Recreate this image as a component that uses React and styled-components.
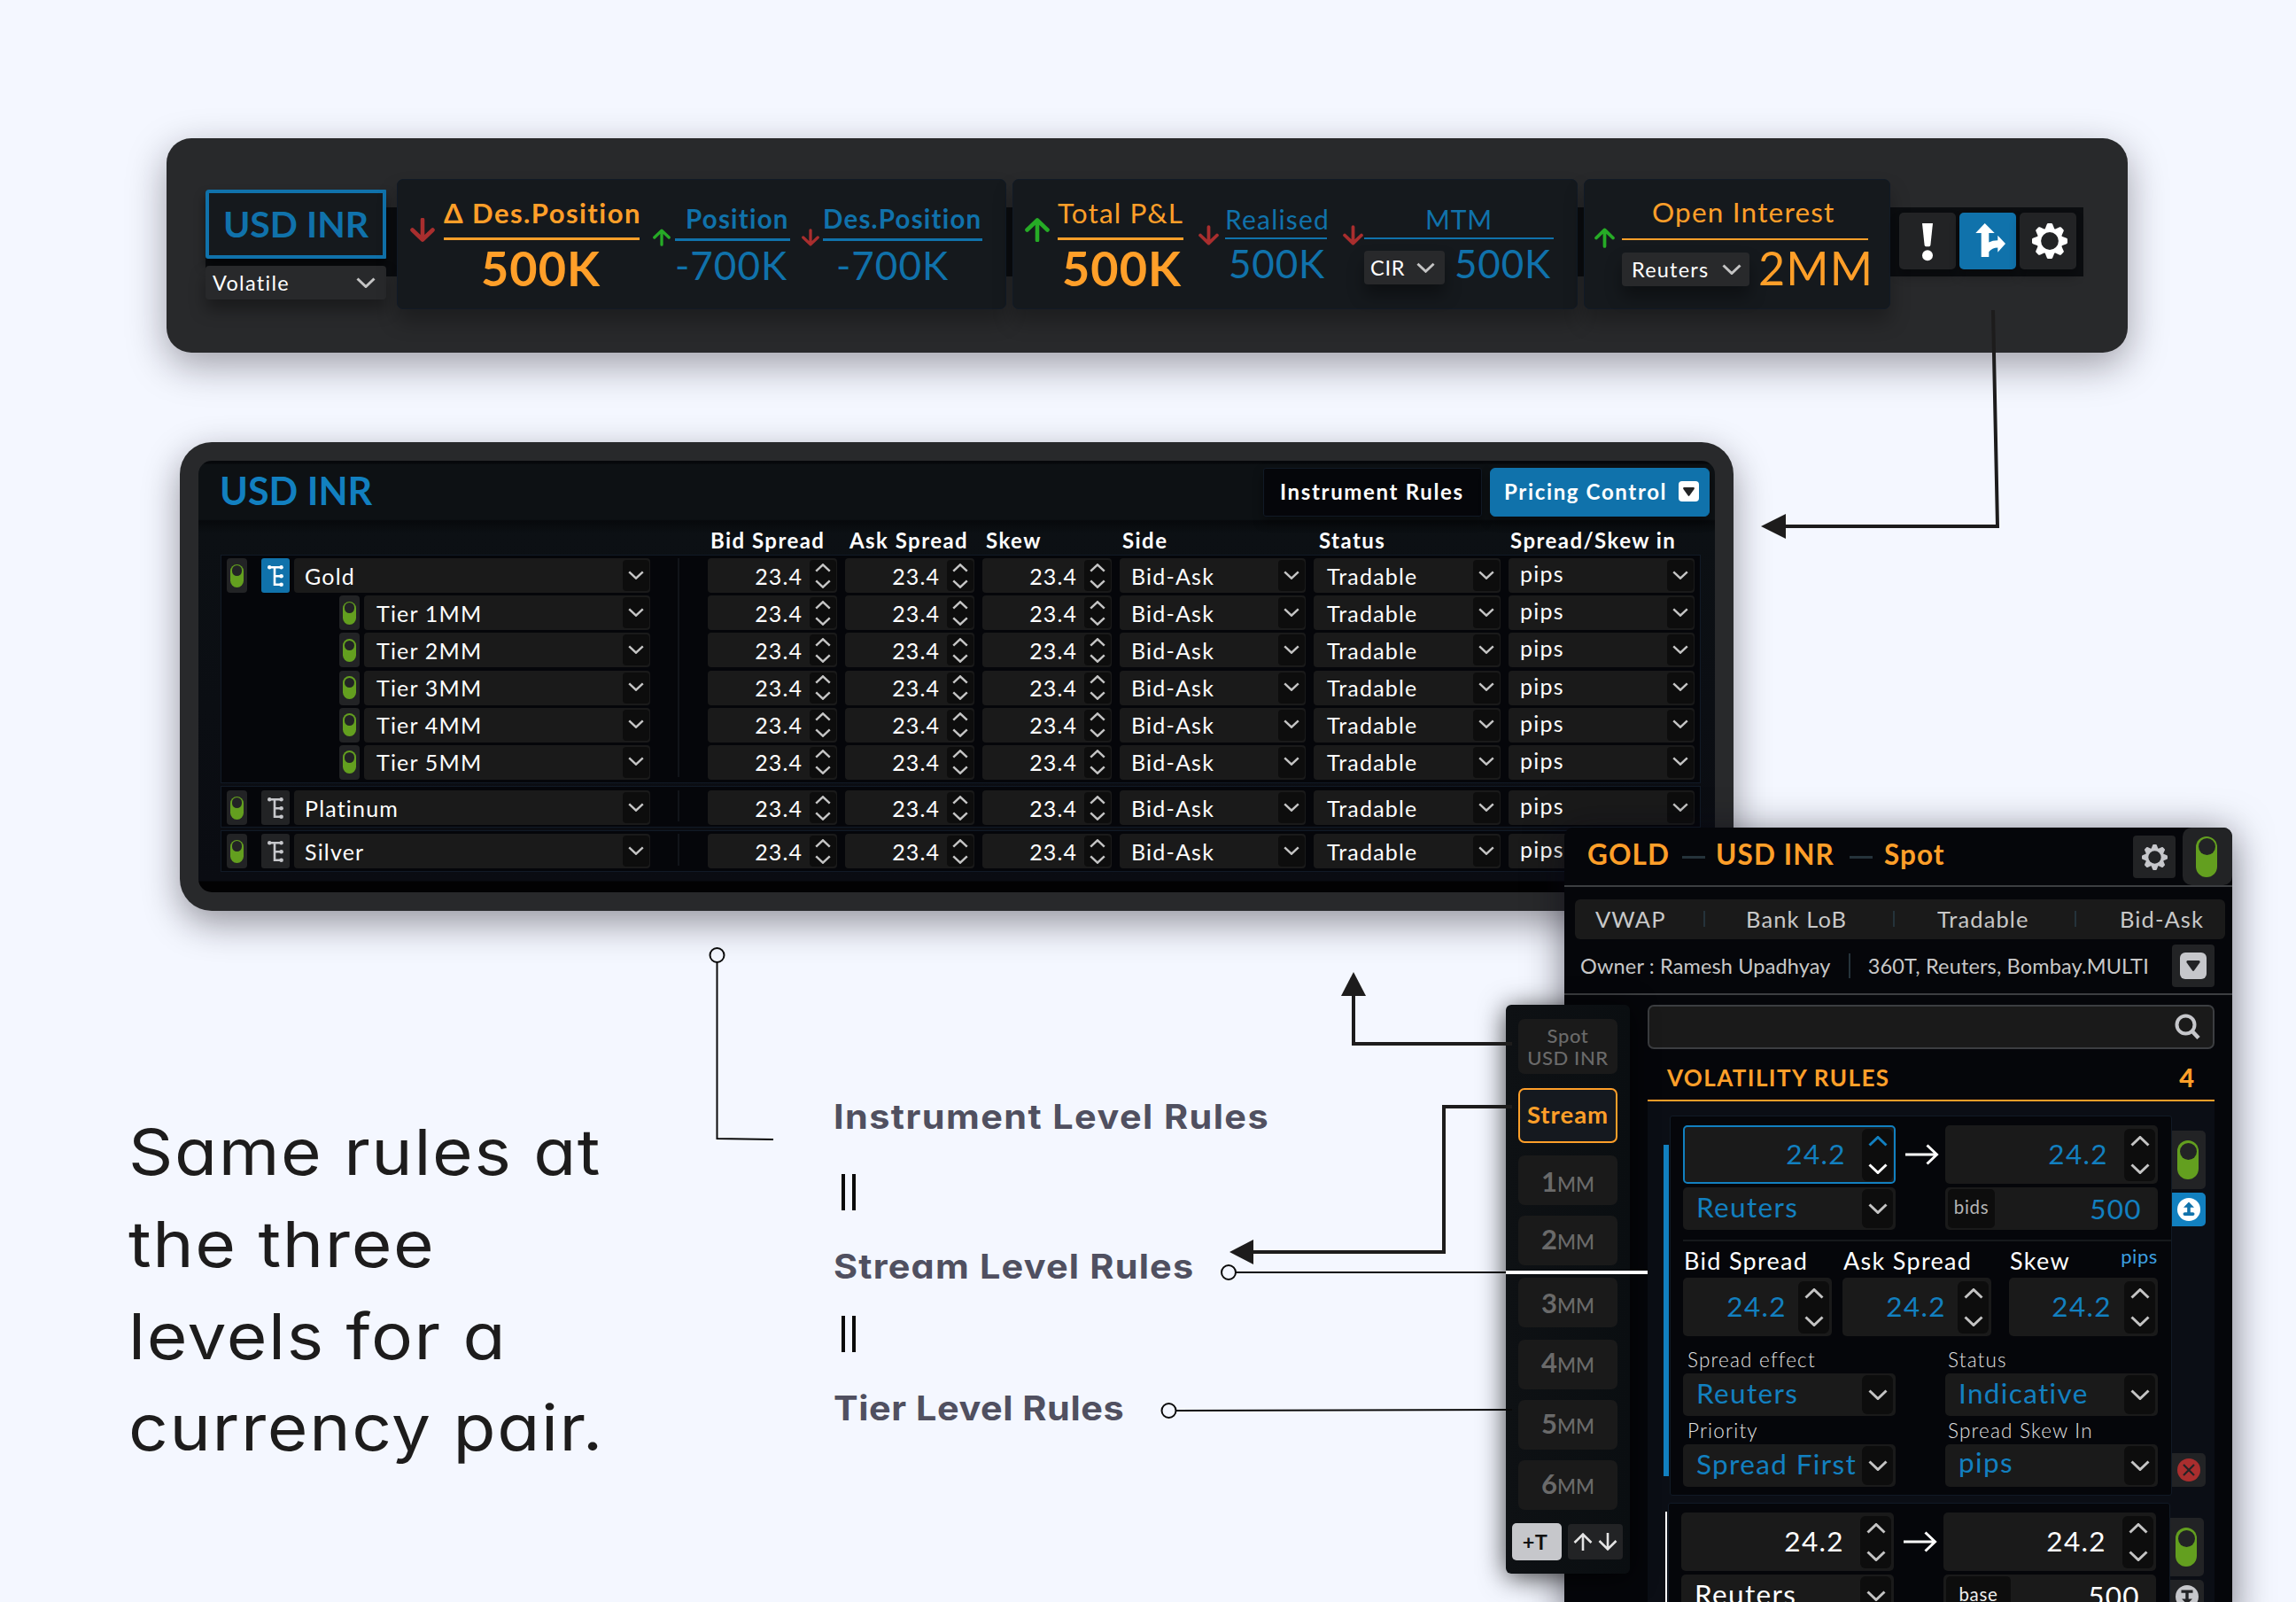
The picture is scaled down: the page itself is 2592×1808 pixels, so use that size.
import React from "react";
import styled, { createGlobalStyle, css, ThemeProvider } from "styled-components";

const theme = {
  page: "#f4f7ff",
  frame: "#28292b",
  black: "#05060a",
  panel: "#15191d",
  field: "#1a1a1a",
  fieldDark: "#0d0d0d",
  button: "#222325",
  line: "#3c3e41",
  edge: "#111a26",
  blue: "#1072ab",
  sky: "#1280c0",
  orange: "#ff9f29",
  green: "#639f1f",
  up: "#26ab26",
  red: "#a92e2e",
  silver: "#c6c7cb",
  ink: "#1d1c1c",
  muted: "#505060"
};

const GlobalStyle = createGlobalStyle`
  * { box-sizing: border-box; }
  body {
    margin: 0;
    background: #f4f7ff;
    font-family: Lato, "Open Sans", sans-serif;
    color: white;
  }
  svg { display: block; flex: none; }
`;

const Canvas = styled.main`
  position: relative;
  width: 2592px;
  height: 1808px;
  overflow: hidden;
  background: ${p => p.theme.page};
`;

/* ---------- icons ---------- */

const Chevron = ({ up, color = "#c4c4c4", w = 22, h = 12 }) => (
  <svg width={w} height={h} viewBox="0 0 22 12" fill="none">
    <path
      d={up ? "M1.5 10.5 11 1.5l9.5 9" : "M1.5 1.5 11 10.5l9.5-9"}
      stroke={color}
      strokeWidth="3"
    />
  </svg>
);

const TrendArrow = ({ up, w = 28, h = 27 }) => (
  <svg width={w} height={h} viewBox="0 0 28 27" fill="none">
    <path
      d={up ? "M14 25V3M2.5 13.5 14 2.5l11.5 11" : "M14 2v22M2.5 13.5l11.5 11 11.5-11"}
      stroke={up ? theme.up : theme.red}
      strokeWidth="4.6"
      strokeLinecap="round"
      strokeLinejoin="round"
    />
  </svg>
);

const Gear = ({ size = 40, color = "white", hole = theme.button }) => (
  <svg width={size} height={size} viewBox="-20 -20 40 40">
    {[0, 45, 90, 135, 180, 225, 270, 315].map(a => (
      <path
        key={a}
        d="M-5.5-13-3.2-19q.4-1 1.4-1h3.6q1 0 1.4 1L5.5-13z"
        fill={color}
        transform={`rotate(${a})`}
      />
    ))}
    <circle r="14.6" fill={color} />
    <circle r="9.9" fill={hole} />
  </svg>
);

const Alert = () => (
  <svg width="64" height="64" viewBox="0 0 64 64" fill="white">
    <path d="M26 12h12l-2.6 24.5q-.2 1.7-1.6 1.7h-3.6q-1.4 0-1.6-1.7z" />
    <circle cx="32" cy="48.3" r="6" />
  </svg>
);

const Fork = () => (
  <svg width="64" height="64" viewBox="0 0 64 64" fill="white">
    <path d="M28.7 12 39.7 23h-6.4v10.5q4-2.2 10-2.2v-5.6L52 35l-8.7 9.7v-5.2q-6.5.2-10 4.8V50h-8.6V23h-6.4z" />
  </svg>
);

const Tree = ({ color }) => (
  <svg width="18" height="24" viewBox="0 0 18 24" fill="none">
    <path d="M2 2.2h13M8 2.2v19.6h8M8 12.2h8" stroke={color} strokeWidth="2.6" />
    <g fill={color}>
      <circle cx="2.2" cy="2.2" r="2.2" />
      <circle cx="15.6" cy="2.2" r="2.2" />
      <circle cx="15.6" cy="12.2" r="2.3" />
      <circle cx="15.6" cy="21.7" r="2.3" />
    </g>
  </svg>
);

const Magnifier = () => (
  <svg width="30" height="30" viewBox="0 0 30 30" fill="none" stroke={theme.silver}>
    <circle cx="12.5" cy="12.5" r="10" strokeWidth="4" />
    <path d="M19.5 19.5l7.5 8" strokeWidth="4.6" />
  </svg>
);

const ArrowIcon = styled.svg`
  margin-left: 4px;
`;

const RightArrow = () => (
  <ArrowIcon width="38" height="24" viewBox="0 0 38 24" fill="none" stroke="white" strokeWidth="3">
    <path d="M0 12h35M24.5 1.5 35.5 12l-11 10.5" />
  </ArrowIcon>
);

const Pin = ({ down, color, glyph }) => (
  <svg width="26" height="26" viewBox="0 0 26 26">
    <circle cx="13" cy="13" r="13" fill={color} />
    {down ? (
      <path d="M6.5 5.5h13v3.2h-4.8v6.8h4.3l-6 6-6-6h4.3V8.7H6.5z" fill={glyph} />
    ) : (
      <path d="M13 4.5l6 6.3h-4.200v5.400h2.700q2 0 2 1.900t-2 1.900h-9q-2 0-2-1.900t2-1.900h2.700v-5.400H7z" fill={glyph} />
    )}
  </svg>
);

const Cross = () => (
  <svg width="26" height="26" viewBox="0 0 26 26">
    <circle cx="13" cy="13" r="13" fill={theme.red} />
    <path d="M7 7l12 12M19 7L7 19" stroke="#222325" strokeWidth="2.2" />
  </svg>
);

const SortArrows = () => (
  <svg width="50" height="22" viewBox="0 0 50 22" fill="none" stroke="#e4e4e4" strokeWidth="2.6">
    <path d="M11 21V3M1.5 12 11 2.5l9.5 9.5M39 1v18M29.5 10l9.5 9.5 9.5-9.5" />
  </svg>
);

const DropMark = ({ w = 13, h = 10 }) => (
  <svg width={w} height={h} viewBox="0 0 13 10">
    <path d="M1.2 0h10.6q1.6.3.8 2L7.4 9.3q-.9 1.2-1.8 0L.4 2Q-.4.3 1.2 0z" fill="#222325" />
  </svg>
);

/* ---------- shared parts ---------- */

const PillBody = styled.span`
  display: block;
  width: ${p => p.$w}px;
  height: ${p => p.$h}px;
  padding: ${p => p.$rim}px;
  border-radius: ${p => p.$w}px;
  background: ${p => p.theme.green};

  &::before {
    content: "";
    display: block;
    aspect-ratio: 1;
    border-radius: 50%;
    background: ${p => p.theme.button};
  }
`;

const ToggleBox = styled.div`
  display: flex;
  align-items: center;
  justify-content: center;
  flex: none;
  width: ${p => p.$w || 23}px;
  height: ${p => p.$h || 39}px;
  padding-right: ${p => p.$pr || 0}px;
  border-radius: ${p => p.$r || "4px"};
  background: ${p => p.theme.button};
`;

const SmallToggle = () => (
  <ToggleBox>
    <PillBody $w={15} $h={26} $rim={1.7} />
  </ToggleBox>
);

/* ---------- top bar ---------- */

const TopBar = styled.section`
  position: absolute;
  left: 188px;
  top: 156px;
  width: 2214px;
  height: 242px;
  padding: 46px 50px 0 44px;
  border-radius: 28px;
  background: ${p => p.theme.frame};
  box-shadow: 0 14px 44px rgba(20, 15, 25, 0.38);
`;

const Strip = styled.div`
  display: flex;
  align-items: flex-start;
  height: 147px;
  background: linear-gradient(#0b0d10, #0b0d10) 0 32px / 100% 78px no-repeat;
`;

const PairColumn = styled.div`
  width: 204px;
  margin: 12px 12px 0 0;
`;

const PairName = styled.div`
  height: 78px;
  border: 4px solid ${p => p.theme.blue};
  border-radius: 4px 1px 1px 3px;
  background: ${p => p.theme.panel};
  color: ${p => p.theme.blue};
  font-size: 41px;
  font-weight: 700;
  line-height: 69px;
  text-align: center;
  white-space: nowrap;
  box-shadow: 0 8px 12px rgba(0, 0, 0, 0.5);
`;

const SmallSelect = styled.div`
  display: flex;
  align-items: center;
  justify-content: space-between;
  flex: none;
  width: ${p => p.$w}px;
  height: 38px;
  margin-top: ${p => p.$mt || 0}px;
  padding: 0 ${p => p.$pr || 12}px 0 ${p => p.$pl || 8}px;
  border-radius: 4px;
  background: #28292b;
  font-size: 23.5px;
  letter-spacing: ${p => p.$ls ?? 1.2}px;
  box-shadow: 0 12px 18px rgba(0, 0, 0, 0.35);
`;

const MetricPanel = styled.div`
  display: flex;
  align-items: flex-start;
  width: ${p => p.$w}px;
  height: 147px;
  margin-right: ${p => (p.$last ? 10 : 7)}px;
  border: 1px solid ${p => p.theme.edge};
  border-radius: 7px;
  background: ${p => p.theme.panel};
  box-shadow: 0 14px 22px rgba(0, 0, 0, 0.28);
`;

const ArrowSlot = styled.div`
  margin: ${p => p.$mt}px ${p => p.$mr}px 0 ${p => p.$ml}px;
`;

const Metric = styled.div`
  width: ${p => p.$w}px;
  padding-top: ${p => p.$pt}px;
  color: ${p => (p.$hot ? p.theme.orange : p.theme.blue)};
`;

const MetricLabel = styled.div`
  padding-left: ${p => p.$pl || 0}px;
  font-size: ${p => p.$size}px;
  font-weight: ${p => (p.$bold ? 700 : 400)};
  line-height: 1.2;
  letter-spacing: ${p => p.$ls ?? 1.2}px;
  white-space: nowrap;
`;

const Rule = styled.div`
  height: ${p => p.$h || 2}px;
  margin-top: ${p => p.$mt}px;
  background: currentColor;
`;

const MetricValue = styled.div`
  margin-top: ${p => p.$mt || 0}px;
  padding-left: ${p => p.$pl || 0}px;
  font-size: ${p => p.$size}px;
  font-weight: ${p => (p.$bold ? 700 : 400)};
  line-height: 1.2;
  letter-spacing: ${p => p.$ls ?? 0.9}px;
  white-space: nowrap;
`;

const ValueLine = styled.div`
  display: flex;

  ${SmallSelect} {
    color: white;
  }
`;

const ToolButton = styled.div`
  display: flex;
  align-items: center;
  justify-content: center;
  width: 64px;
  height: 64px;
  margin: 38px 4px 0 0;
  border-radius: 5px;
  background: ${p => (p.$active ? p.theme.blue : p.theme.button)};
  box-shadow: 0 8px 12px rgba(0, 0, 0, 0.25);
`;

const GearShift = styled.div`
  margin-left: 3px;
`;

const Positions = () => (
  <TopBar>
    <Strip>
      <PairColumn>
        <PairName>USD INR</PairName>
        <SmallSelect $w={204} $mt={8} $ls={1.3}>
          Volatile <Chevron />
        </SmallSelect>
      </PairColumn>

      <MetricPanel $w={688}>
        <ArrowSlot $ml={14} $mt={43} $mr={10}>
          <TrendArrow />
        </ArrowSlot>
        <Metric $w={221} $pt={19} $hot>
          <MetricLabel $size={31} $bold $ls={1.45}>Δ Des.Position</MetricLabel>
          <Rule $mt={9} $h={3} />
          <MetricValue $size={54} $bold $pl={42} $ls={1}>500K</MetricValue>
        </Metric>
        <ArrowSlot $ml={15} $mt={55} $mr={5}>
          <TrendArrow up w={20} h={20} />
        </ArrowSlot>
        <Metric $w={130} $pt={26}>
          <MetricLabel $size={29.5} $bold $pl={12}>Position</MetricLabel>
          <Rule $mt={5} $h={3} />
          <MetricValue $size={44} $mt={1} $ls={1}>-700K</MetricValue>
        </Metric>
        <ArrowSlot $ml={13} $mt={55} $mr={4}>
          <TrendArrow w={20} h={20} />
        </ArrowSlot>
        <Metric $w={180} $pt={26}>
          <MetricLabel $size={29.5} $bold>Des.Position</MetricLabel>
          <Rule $mt={5} $h={3} />
          <MetricValue $size={44} $mt={1} $pl={15} $ls={1}>-700K</MetricValue>
        </Metric>
      </MetricPanel>

      <MetricPanel $w={638}>
        <ArrowSlot $ml={13} $mt={43} $mr={9}>
          <TrendArrow up />
        </ArrowSlot>
        <Metric $w={142} $pt={19} $hot>
          <MetricLabel $size={31.5} $ls={1.1}>Total P&amp;L</MetricLabel>
          <Rule $mt={8} $h={3} />
          <MetricValue $size={54} $bold $pl={5} $ls={1}>500K</MetricValue>
        </Metric>
        <ArrowSlot $ml={17} $mt={51} $mr={7}>
          <TrendArrow w={23} h={23} />
        </ArrowSlot>
        <Metric $w={115} $pt={26}>
          <MetricLabel $size={30} $ls={1.2}>Realised</MetricLabel>
          <Rule $mt={3} $h={2} />
          <MetricValue $size={44} $mt={1} $pl={4} $ls={0.8}>500K</MetricValue>
        </Metric>
        <ArrowSlot $ml={18} $mt={51} $mr={1}>
          <TrendArrow w={23} h={23} />
        </ArrowSlot>
        <Metric $w={214} $pt={26}>
          <MetricLabel $size={30} $pl={69} $ls={0.9}>MTM</MetricLabel>
          <Rule $mt={3} $h={2} />
          <ValueLine>
            <SmallSelect $w={91} $mt={13} $pr={11} $pl={7} $ls={0.7}>
              CIR <Chevron w={21} />
            </SmallSelect>
            <MetricValue $size={44} $mt={1} $pl={11} $ls={0.8}>500K</MetricValue>
          </ValueLine>
        </Metric>
      </MetricPanel>

      <MetricPanel $w={346} $last>
        <ArrowSlot $ml={11} $mt={54} $mr={8}>
          <TrendArrow up w={23} h={23} />
        </ArrowSlot>
        <Metric $w={278} $pt={18} $hot>
          <MetricLabel $size={31.5} $pl={34} $ls={1.2}>Open Interest</MetricLabel>
          <Rule $mt={10} $h={2} />
          <ValueLine>
            <SmallSelect $w={144} $mt={14} $pl={11} $pr={9}>
              Reuters <Chevron />
            </SmallSelect>
            <MetricValue $size={52} $pl={10} $ls={1.2}>2MM</MetricValue>
          </ValueLine>
        </Metric>
      </MetricPanel>

      <ToolButton><Alert /></ToolButton>
      <ToolButton $active><Fork /></ToolButton>
      <ToolButton><GearShift><Gear /></GearShift></ToolButton>
    </Strip>
  </TopBar>
);

/* ---------- pricing table ---------- */

const TableWindow = styled.section`
  position: absolute;
  left: 203px;
  top: 499px;
  width: 1754px;
  height: 529px;
  padding: 21px;
  border-radius: 36px;
  background: ${p => p.theme.frame};
  box-shadow: 0 14px 40px rgba(20, 15, 25, 0.42);
`;

const TableBody = styled.div`
  height: 487px;
  border-radius: 15px;
  background: linear-gradient(#06080b 0 3px, #0d1114 4px 66px, #07090c 68px, #0c1014 82px, #0a0c12 474px, #020203 475px);
  overflow: hidden;
`;

const TableHeader = styled.header`
  display: flex;
  align-items: flex-start;
  height: 66px;
  padding: 8px 6px 0 24px;
`;

const TableTitle = styled.h1`
  flex: 1;
  margin: 0;
  color: ${p => p.theme.sky};
  font-size: 43px;
  font-weight: 700;
  line-height: 52px;
`;

const TabButton = styled.div`
  display: flex;
  align-items: center;
  width: ${p => p.$w}px;
  height: 55px;
  margin-left: 9px;
  padding-left: ${p => (p.$active ? 15 : 18)}px;
  padding-bottom: 2px;
  border: 1px solid ${p => (p.$active ? p.theme.blue : p.theme.edge)};
  border-radius: ${p => (p.$active ? 6 : 3)}px;
  background: ${p => (p.$active ? p.theme.blue : p.theme.black)};
  font-size: 24px;
  font-weight: 700;
  letter-spacing: 1.65px;
  white-space: nowrap;
  box-shadow: 0 6px 12px rgba(0, 0, 0, 0.4);
`;

const Badge = styled.span`
  display: flex;
  align-items: center;
  justify-content: center;
  flex: none;
  width: ${p => p.$w || 23}px;
  height: ${p => p.$h || 23}px;
  margin-left: ${p => p.$ml || 0}px;
  border-radius: ${p => p.$r || 4}px;
  background: ${p => p.$bg || "white"};
`;

const columns = css`
  display: grid;
  grid-template-columns: 146px 146px 146px 210px 211px 210px;
  column-gap: 9px;
`;

const HeadRow = styled.div`
  ${columns}
  height: 40px;
  margin-left: 575px;
  padding-top: 9px;
  font-size: 24px;
  font-weight: 700;
  line-height: 29px;
  letter-spacing: 1.45px;
`;

const HeadCell = styled.div`
  padding-left: ${p => p.$pl}px;
  white-space: nowrap;
`;

const Group = styled.div`
  display: flex;
  width: 1671px;
  height: ${p => p.$h}px;
  margin: 0 0 3px 25px;
  padding: ${p => p.$pt}px 6px 0;
  border: 1px solid ${p => p.theme.edge};
  background: ${p => p.theme.black};
`;

const Stack = styled.div`
  display: flex;
  flex-direction: column;
  gap: 3.2px;
  width: ${p => p.$w}px;
`;

const LeadRow = styled.div`
  display: flex;
  height: 39px;
  gap: 5px;
  padding-left: ${p => (p.$tier ? 127 : 0)}px;
`;

const TreeButton = styled.div`
  display: flex;
  align-items: center;
  justify-content: center;
  width: 32px;
  height: 39px;
  margin-left: 11px;
  border-radius: 3px;
  background: ${p => (p.$active ? p.theme.blue : p.theme.button)};
`;

const Divider = styled.div`
  width: 2px;
  margin: 0 32px 6px 31px;
  background: #11141a;
`;

const Cell = styled.div`
  display: flex;
  align-items: center;
  flex: ${p => (p.$grow ? 1 : "none")};
  height: 39px;
  padding: 1px 1px 1px ${p => p.$pl || 13}px;
  border-radius: 4px;
  background: ${p => p.theme.field};
  font-size: 25px;
  letter-spacing: 1.2px;
`;

const CellText = styled.span`
  flex: 1;
  padding-right: ${p => (p.$num ? 8 : 0)}px;
  padding-bottom: ${p => (p.$lift ? 5 : 0)}px;
  letter-spacing: ${p => (p.$num ? "1.1px" : "inherit")};
  text-align: ${p => (p.$num ? "right" : "left")};
  white-space: nowrap;
`;

const CellButton = styled.span`
  display: flex;
  flex-direction: column;
  align-items: center;
  justify-content: center;
  gap: 8px;
  width: 30px;
  height: 35px;
  padding-bottom: ${p => (p.$single ? 2 : 0)}px;
  border-radius: 4px;
  background: ${p => p.theme.fieldDark};
`;

const ValueRow = styled.div`
  ${columns}
`;

const SelectCell = ({ text, pl, grow, lift }) => (
  <Cell $pl={pl} $grow={grow}>
    <CellText $lift={lift}>{text}</CellText>
    <CellButton $single><Chevron w={18} h={10} /></CellButton>
  </Cell>
);

const NumberCell = ({ value }) => (
  <Cell>
    <CellText $num>{value}</CellText>
    <CellButton>
      <Chevron up w={18} h={10} />
      <Chevron w={18} h={10} />
    </CellButton>
  </Cell>
);

const groups = [
  { name: "Gold", open: true, h: 258, pt: 3, tiers: ["Tier 1MM", "Tier 2MM", "Tier 3MM", "Tier 4MM", "Tier 5MM"] },
  { name: "Platinum", h: 47, pt: 4, tiers: [] },
  { name: "Silver", h: 47, pt: 3, tiers: [] }
];

const headings = [
  ["Bid Spread", 3],
  ["Ask Spread", 5],
  ["Skew", 4],
  ["Side", 3],
  ["Status", 6],
  ["Spread/Skew in", 2]
];

const PricingTable = () => (
  <TableWindow>
    <TableBody>
      <TableHeader>
        <TableTitle>USD INR</TableTitle>
        <TabButton $w={247}>Instrument Rules</TabButton>
        <TabButton $w={248} $active>
          Pricing Control
          <Badge $ml={13}><DropMark /></Badge>
        </TabButton>
      </TableHeader>
      <HeadRow>
        {headings.map(([label, pl]) => (
          <HeadCell key={label} $pl={pl}>{label}</HeadCell>
        ))}
      </HeadRow>
      {groups.map(group => (
        <Group key={group.name} $h={group.h} $pt={group.pt}>
          <Stack $w={478}>
            <LeadRow>
              <SmallToggle />
              <TreeButton $active={group.open}>
                <Tree color={group.open ? "white" : theme.silver} />
              </TreeButton>
              <SelectCell text={group.name} pl={12} grow />
            </LeadRow>
            {group.tiers.map(tier => (
              <LeadRow key={tier} $tier>
                <SmallToggle />
                <SelectCell text={tier} pl={14} grow />
              </LeadRow>
            ))}
          </Stack>
          <Divider />
          <Stack>
            {[group.name, ...group.tiers].map(row => (
              <ValueRow key={row}>
                <NumberCell value="23.4" />
                <NumberCell value="23.4" />
                <NumberCell value="23.4" />
                <SelectCell text="Bid-Ask" />
                <SelectCell text="Tradable" pl={15} />
                <SelectCell text="pips" lift />
              </ValueRow>
            ))}
          </Stack>
        </Group>
      ))}
    </TableBody>
  </TableWindow>
);

/* ---------- rules panel ---------- */

const RulesWindow = styled.section`
  position: absolute;
  left: 1766px;
  top: 934px;
  width: 754px;
  height: 900px;
  border-radius: 10px;
  background: ${p => p.theme.black};
  box-shadow: 0 6px 44px rgba(10, 8, 20, 0.55);
`;

const RulesHeader = styled.header`
  display: flex;
  align-items: flex-start;
  height: 67px;
  padding-left: 26px;
  border-bottom: 2px solid ${p => p.theme.line};
  color: ${p => p.theme.orange};
  font-size: 31.5px;
  font-weight: 700;
  line-height: 61px;
  letter-spacing: 1.1px;
  white-space: nowrap;
`;

const Dash = styled.span`
  width: 26px;
  height: 3px;
  margin: 32px ${p => p.$mr}px 0 ${p => p.$ml}px;
  background: #25333b;
`;

const GearBox = styled.div`
  display: flex;
  align-items: center;
  justify-content: center;
  width: 48px;
  height: 48px;
  margin: ${p => p.$mt || 0}px 8px 0 auto;
  border-radius: 4px;
  background: ${p => p.theme.button};
`;

const TagBar = styled.div`
  display: grid;
  grid-template-columns: 122px 48px 166px 50px 155px 51px auto;
  align-items: center;
  height: 45px;
  margin: 14px 8px 0 12px;
  padding: 0 0 1px 23px;
  border-radius: 6px;
  background: ${p => p.theme.field};
  color: #c8c8c8;
  font-size: 25.5px;
  letter-spacing: 1.1px;
  white-space: nowrap;
`;

const Tick = styled.span`
  width: 2px;
  height: ${p => p.$h || 18}px;
  margin: 0 ${p => p.$m || 0}px;
  background: #25333b;
`;

const OwnerRow = styled.div`
  display: flex;
  align-items: center;
  height: 63px;
  padding: 0 20px 1px 18px;
  border-bottom: 2px solid ${p => p.theme.line};
  color: #c8c8c8;
  font-size: 23.5px;
  letter-spacing: 0.15px;
  white-space: nowrap;

  ${GearBox} {
    margin-right: 0;
  }
`;

const RulesMain = styled.div`
  margin: 11px 20px 0 94px;
`;

const SearchBox = styled.div`
  display: flex;
  align-items: center;
  justify-content: flex-end;
  height: 50px;
  padding-right: 13px;
  border: 2px solid ${p => p.theme.line};
  border-radius: 7px;
  background: ${p => p.theme.field};
`;

const RulesTitle = styled.div`
  display: flex;
  justify-content: space-between;
  height: 59px;
  padding: 15px 23px 0 22px;
  border-bottom: 2px solid ${p => p.theme.orange};
  color: ${p => p.theme.orange};
  font-size: 26px;
  font-weight: 700;
  line-height: 34px;
  letter-spacing: 1.4px;

  b {
    font-size: 29px;
    letter-spacing: 0;
  }
`;

const RuleList = styled.div`
  padding-top: 16px;
  height: 600px;
  background: #0b0e15;
`;

const RuleItem = styled.div`
  display: flex;
  margin: 0 0 8px ${p => (p.$current ? 18 : 20)}px;
`;

const Marker = styled.div`
  width: ${p => (p.$current ? 6 : 2)}px;
  margin: ${p => (p.$current ? "33px 1px 22px 0" : "10px 1px 0 0")};
  background: ${p => (p.$current ? p.theme.sky : "white")};
`;

const Card = styled.div`
  width: 567px;
  height: 429px;
  padding: 10px 14px 0;
  border: 1px solid ${p => p.theme.edge};
  border-radius: 3px;
  background: ${p => p.theme.black};
  color: ${p => (p.$current ? p.theme.sky : "white")};
`;

const Pair = styled.div`
  display: flex;
  justify-content: space-between;
  align-items: center;
  width: 536px;
  margin-bottom: ${p => p.$mb || 0}px;
`;

const Field = styled.div`
  display: flex;
  align-items: center;
  width: ${p => p.$w || 240}px;
  height: ${p => p.$h || 48}px;
  padding: ${p => (p.$focus ? "0 1px" : "0 3px")};
  border: ${p => (p.$focus ? 2 : 0)}px solid ${p => p.theme.sky};
  border-radius: 5px;
  background: ${p => p.theme.field};
  font-size: 31.5px;
  letter-spacing: 1.35px;
`;

const FieldText = styled.span`
  flex: 1;
  padding: 0 ${p => p.$pr ?? 0}px ${p => p.$pb || 0}px 12px;
  text-align: ${p => (p.$num ? "right" : "left")};
  white-space: nowrap;
`;

const FieldButton = styled.span`
  display: flex;
  flex-direction: column;
  align-items: center;
  justify-content: center;
  gap: 19px;
  flex: none;
  width: 35px;
  height: ${p => (p.$tall ? 59 : 44)}px;
  border-radius: 6px;
  background: ${p => p.theme.fieldDark};
`;

const Unit = styled.span`
  flex: none;
  width: ${p => p.$w}px;
  height: 44px;
  border-radius: 5px;
  background: ${p => p.theme.fieldDark};
  color: ${p => (p.$current ? "#b4b4b4" : "#eee")};
  font-size: 20.5px;
  line-height: 41px;
  letter-spacing: 0.7px;
  text-align: center;
`;

const CardLine = styled.div`
  height: 2px;
  margin: 11px -14px 0 0;
  background: #16191c;
`;

const SpreadGrid = styled.div`
  display: grid;
  grid-template-columns: 180px 188px 168px;
  width: 536px;
`;

const SpreadLabel = styled.div`
  display: flex;
  justify-content: space-between;
  height: 41px;
  padding: 6px 0 0 1px;
  color: white;
  font-size: 27px;
  line-height: 32px;
  letter-spacing: 1.3px;
  white-space: nowrap;

  em {
    color: #3c9fe0;
    font-size: 22px;
    font-style: normal;
    line-height: 21px;
    letter-spacing: 0.6px;
  }
`;

const TinyLabels = styled.div`
  display: grid;
  grid-template-columns: 294px 1fr;
  align-items: end;
  height: ${p => p.$h}px;
  padding: 0 0 2px 5px;
  color: #e2e2e2;
  font-size: 22.5px;
  font-weight: 300;
  line-height: 27px;
  letter-spacing: 1.2px;
`;

const Actions = styled.div`
  display: flex;
  flex-direction: column;
  gap: 4px;
  padding: 17px 0 10px;
`;

const ActionBox = styled.div`
  display: flex;
  align-items: center;
  justify-content: center;
  width: 38px;
  height: 38px;
  border-radius: 0 5px 5px 0;
  background: ${p => (p.$active ? p.theme.sky : p.theme.button)};
  margin-top: ${p => (p.$last ? "auto" : 0)};
`;

const SpinField = ({ w, focus, pr = 18 }) => (
  <Field $w={w} $h={66} $focus={focus}>
    <FieldText $num $pr={pr} $pb={3}>24.2</FieldText>
    <FieldButton $tall>
      <Chevron up color={focus ? theme.sky : undefined} />
      <Chevron color={focus ? "white" : undefined} />
    </FieldButton>
  </Field>
);

const SelectField = ({ text, lift }) => (
  <Field>
    <FieldText $pb={lift ? 8 : 4}>{text}</FieldText>
    <FieldButton><Chevron /></FieldButton>
  </Field>
);

const RuleCard = ({ current, unit }) => (
  <RuleItem $current={current}>
    <Marker $current={current} />
    <Card $current={current}>
      <Pair $mb={4}>
        <SpinField focus={current} />
        <RightArrow />
        <SpinField />
      </Pair>
      <Pair>
        <SelectField text="Reuters" />
        <Field>
          <Unit $w={current ? 53 : 73} $current={current}>{unit}</Unit>
          <FieldText $num $pr={15} $pb={1}>500</FieldText>
        </Field>
      </Pair>
      {current && (
        <>
          <CardLine />
          <SpreadGrid>
            <SpreadLabel>Bid Spread</SpreadLabel>
            <SpreadLabel>Ask Spread</SpreadLabel>
            <SpreadLabel>Skew <em>pips</em></SpreadLabel>
            <SpinField w={168} pr={13} />
            <SpinField w={168} pr={13} />
            <SpinField w={168} pr={14} />
          </SpreadGrid>
          <TinyLabels $h={42}><span>Spread effect</span><span>Status</span></TinyLabels>
          <Pair>
            <SelectField text="Reuters" />
            <SelectField text="Indicative" />
          </Pair>
          <TinyLabels $h={32}><span>Priority</span><span>Spread Skew In</span></TinyLabels>
          <Pair>
            <SelectField text="Spread First" />
            <SelectField text="pips" lift />
          </Pair>
        </>
      )}
    </Card>
    <Actions>
      <ToggleBox $w={38} $h={66} $r="0 5px 5px 0" $pr={2}>
        <PillBody $w={24} $h={44} $rim={2.5} />
      </ToggleBox>
      <ActionBox $active={current}>
        <Pin
          down={!current}
          color={current ? "white" : theme.silver}
          glyph={current ? theme.blue : "#222325"}
        />
      </ActionBox>
      {current && <ActionBox $last><Cross /></ActionBox>}
    </Actions>
  </RuleItem>
);

const RulesPanel = () => (
  <RulesWindow>
    <RulesHeader>
      GOLD <Dash $ml={14} $mr={12} /> USD INR <Dash $ml={17} $mr={13} /> Spot
      <GearBox $mt={9}><Gear size={29} color={theme.silver} /></GearBox>
      <ToggleBox $w={56} $h={65} $r="10px" $pr={2}>
        <PillBody $w={24} $h={46} $rim={2.5} />
      </ToggleBox>
    </RulesHeader>
    <TagBar>
      <span>VWAP</span><Tick />
      <span>Bank LoB</span><Tick />
      <span>Tradable</span><Tick />
      <span>Bid-Ask</span>
    </TagBar>
    <OwnerRow>
      Owner : Ramesh Upadhyay
      <Tick $h={28} $m={20} />
      360T, Reuters, Bombay.MULTI
      <GearBox><Badge $w={30} $h={30} $r={6} $bg={theme.silver}><DropMark w={16} h={12} /></Badge></GearBox>
    </OwnerRow>
    <RulesMain>
      <SearchBox><Magnifier /></SearchBox>
      <RulesTitle><span>VOLATILITY RULES</span><b>4</b></RulesTitle>
      <RuleList>
        <RuleCard current unit="bids" />
        <RuleCard unit="base" />
      </RuleList>
    </RulesMain>
  </RulesWindow>
);

/* ---------- tier sidebar ---------- */

const Sidebar = styled.aside`
  position: absolute;
  left: 1700px;
  top: 1134px;
  width: 140px;
  height: 642px;
  padding: 16px 0 0 7px;
  border-radius: 6px;
  background: linear-gradient(90deg, #0e1114, #0a0e11);
  box-shadow: 0 4px 30px rgba(0, 0, 0, 0.75);
`;

const SideItem = styled.div`
  display: flex;
  flex-direction: column;
  align-items: center;
  justify-content: center;
  width: 112px;
  height: ${p => p.$h || 56}px;
  margin: 0 0 ${p => p.$mb || 12}px 7px;
  padding-top: ${p => p.$pt || 0}px;
  padding-bottom: ${p => p.$pb || 0}px;
  border: ${p => (p.$active ? 2 : 0)}px solid ${p => p.theme.orange};
  border-radius: 7px;
  background: ${p => (p.$active ? "#15191f" : p.theme.field)};
  color: ${p => (p.$active ? p.theme.orange : "#6a6a6a")};
  font-size: ${p => (p.$active ? 27.5 : 22)}px;
  font-weight: ${p => (p.$active ? 700 : 500)};
  line-height: 25.5px;
  letter-spacing: ${p => (p.$active ? 1 : 0.6)}px;
`;

const TierSize = styled.span`
  font-size: 22.5px;
  line-height: 37px;
  letter-spacing: 0;

  b {
    font-size: 31px;
    font-weight: 700;
  }
`;

const SideFooter = styled.div`
  display: flex;
  align-items: center;
  gap: 7px;
`;

const AddTier = styled.div`
  width: 56px;
  height: 42px;
  padding-right: 4px;
  border-radius: 5px;
  background: ${p => p.theme.silver};
  color: #111;
  font-size: 23.5px;
  font-weight: 700;
  line-height: 42px;
  letter-spacing: 0.5px;
  text-align: center;
`;

const SortBox = styled.div`
  display: flex;
  align-items: center;
  justify-content: center;
  width: 62px;
  height: 40px;
  border-radius: 4px;
  background: ${p => p.theme.button};
`;

const tierItems = [
  { n: 1, mb: 12, pt: 5 },
  { n: 2, mb: 14, pb: 1 },
  { n: 3, mb: 14, pt: 3 },
  { n: 4, mb: 12, pb: 3 },
  { n: 5, mb: 12, pt: 0 },
  { n: 6, mb: 15, pt: 0 }
];

const TierSidebar = () => (
  <Sidebar>
    <SideItem $h={62} $mb={16}><span>Spot</span><span>USD INR</span></SideItem>
    <SideItem $h={62} $mb={14} $pb={2} $active>Stream</SideItem>
    {tierItems.map(t => (
      <SideItem key={t.n} $mb={t.mb} $pt={t.pt} $pb={t.pb}>
        <TierSize><b>{t.n}</b>MM</TierSize>
      </SideItem>
    ))}
    <SideFooter>
      <AddTier>+T</AddTier>
      <SortBox><SortArrows /></SortBox>
    </SideFooter>
  </Sidebar>
);

/* ---------- captions and connectors ---------- */

const Headline = styled.h2`
  position: absolute;
  left: 145px;
  top: 1248px;
  margin: 0;
  color: ${p => p.theme.ink};
  font-family: Inter, sans-serif;
  font-feature-settings: "cv11";
  font-size: 72px;
  font-weight: 400;
  line-height: 103.8px;
  letter-spacing: 1.5px;
  white-space: pre-line;
  transform: scaleX(1.09);
  transform-origin: 0 0;
`;

const Levels = styled.div`
  position: absolute;
  left: 941px;
  top: 1235px;
  display: flex;
  flex-direction: column;
  color: ${p => p.theme.muted};
  font-family: Inter, sans-serif;
  font-feature-settings: "cv11";
  font-size: 38px;
  font-weight: 700;
  line-height: 50px;
`;

const Level = styled.div`
  letter-spacing: ${p => p.$ls}px;
  white-space: nowrap;
  transform: scaleX(1.09);
  transform-origin: 0 0;
`;

const Equals = styled.div`
  width: 16px;
  height: 41px;
  margin: ${p => p.$mt}px 0 ${p => p.$mb}px 9px;
  border: solid #0a0a0a;
  border-width: 0 4px;
`;

const Connectors = styled.svg`
  position: absolute;
  inset: 0;
  fill: none;
  stroke: ${p => p.theme.ink};
  stroke-width: 4;
`;

const Links = () => (
  <Connectors width="2592" height="1808" viewBox="0 0 2592 1808">
    <path d="M2250 350l5 244H2012" />
    <path d="M1988 594l28-14v28z" fill={theme.ink} stroke="none" />
    <path d="M1707 1178H1528V1120" />
    <path d="M1528 1097l14 27h-28z" fill={theme.ink} stroke="none" />
    <path d="M1707 1249H1630V1413H1412" />
    <path d="M1388 1413l27-14v28z" fill={theme.ink} stroke="none" />
    <g stroke="#0a0a0a" strokeWidth="2">
      <circle cx="809.5" cy="1078" r="8" />
      <path d="M809.5 1086v199l63.5 1" />
      <circle cx="1387" cy="1436" r="8" />
      <path d="M1395 1436h305" />
      <circle cx="1319.5" cy="1592" r="8" />
      <path d="M1328 1592l379-1" />
    </g>
    <path d="M1700 1436h160" stroke="white" />
  </Connectors>
);

const App = () => (
  <ThemeProvider theme={theme}>
    <GlobalStyle />
    <Canvas>
      <Positions />
      <PricingTable />
      <RulesPanel />
      <TierSidebar />
      <Headline>{"Same rules at\nthe three\nlevels for a\ncurrency pair."}</Headline>
      <Levels>
        <Level $ls={1.3}>Instrument Level Rules</Level>
        <Equals $mt={40} $mb={38} />
        <Level $ls={1.1}>Stream Level Rules</Level>
        <Equals $mt={31} $mb={38} />
        <Level $ls={0.5}>Tier Level Rules</Level>
      </Levels>
      <Links />
    </Canvas>
  </ThemeProvider>
);

export default App;
